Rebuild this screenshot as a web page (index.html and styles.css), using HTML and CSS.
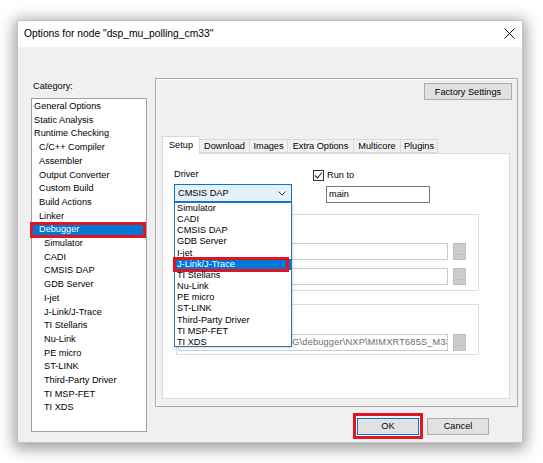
FILE: index.html
```html
<!DOCTYPE html>
<html lang="en">

<head>
    <meta charset="UTF-8">
    <meta name="viewport" content="width=device-width, initial-scale=1.0">
    <title>Options for node</title>
    <link rel="stylesheet" href="styles.css">
</head>

<body>
    <div class="dialog">
        <header class="titlebar">
            <span class="title">Options for node "dsp_mu_polling_cm33"</span>
            <svg class="close" width="11" height="11" viewBox="0 0 11 11">
                <path d="M0.5 0.5 L10.5 10.5 M10.5 0.5 L0.5 10.5" stroke="#111" stroke-width="1" fill="none" />
            </svg>
        </header>
        <div class="dialog-body">
            <div class="category-col">
                <div class="category-label">Category:</div>
                <ul class="tree">
                    <li class="lvl0">General Options</li>
                    <li class="lvl0">Static Analysis</li>
                    <li class="lvl0">Runtime Checking</li>
                    <li class="lvl1">C/C++ Compiler</li>
                    <li class="lvl1">Assembler</li>
                    <li class="lvl1">Output Converter</li>
                    <li class="lvl1">Custom Build</li>
                    <li class="lvl1">Build Actions</li>
                    <li class="lvl1">Linker</li>
                    <li class="lvl1 selected">Debugger</li>
                    <li class="lvl2">Simulator</li>
                    <li class="lvl2">CADI</li>
                    <li class="lvl2">CMSIS DAP</li>
                    <li class="lvl2">GDB Server</li>
                    <li class="lvl2">I-jet</li>
                    <li class="lvl2">J-Link/J-Trace</li>
                    <li class="lvl2">TI Stellaris</li>
                    <li class="lvl2">Nu-Link</li>
                    <li class="lvl2">PE micro</li>
                    <li class="lvl2">ST-LINK</li>
                    <li class="lvl2">Third-Party Driver</li>
                    <li class="lvl2">TI MSP-FET</li>
                    <li class="lvl2">TI XDS</li>
                </ul>
            </div>
            <div class="main-col">
                <div class="panel">
                    <div class="panel-top">
                        <button class="btn factory">Factory Settings</button>
                    </div>
                    <div class="tabs">
                        <div class="tab active" style="width: 38px;">Setup</div>
                        <div class="tab" style="width: 50px;">Download</div>
                        <div class="tab" style="width: 38px;">Images</div>
                        <div class="tab" style="width: 66px;">Extra Options</div>
                        <div class="tab" style="width: 47px;">Multicore</div>
                        <div class="tab" style="width: 37px;">Plugins</div>
                    </div>
                    <div class="tab-page">
                        <div class="setup-top">
                            <div class="driver-col">
                                <div class="label">Driver</div>
                                <div class="combo">
                                    <span>CMSIS DAP</span>
                                    <svg width="8" height="5" viewBox="0 0 8 5">
                                        <path d="M0.5 0.5 L4 4 L7.5 0.5" stroke="#333" stroke-width="1" fill="none" />
                                    </svg>
                                </div>
                            </div>
                            <div class="runto-col">
                                <label class="check-row">
                                    <span class="checkbox">
                                        <svg width="9" height="9" viewBox="0 0 9 9">
                                            <path d="M1 4.5 L3.5 7 L8 1.5" stroke="#222" stroke-width="1.1" fill="none" />
                                        </svg>
                                    </span>
                                    Run to
                                </label>
                                <div class="edit runto-edit">main</div>
                            </div>
                        </div>
                        <div class="group group-macros">
                            <div class="edit-row">
                                <div class="edit disabled wide"></div>
                                <span class="browse">...</span>
                            </div>
                            <div class="edit-row">
                                <div class="edit disabled wide"></div>
                                <span class="browse">...</span>
                            </div>
                        </div>
                        <div class="group group-ddf">
                            <div class="edit-row">
                                <div class="edit disabled ddf">$TOOLKIT_DIR$\CONFIG\debugger\NXP\MIMXRT685S_M33.ddf</div>
                                <span class="browse">...</span>
                            </div>
                        </div>
                        <ul class="dropdown-list">
                            <li>Simulator</li>
                            <li>CADI</li>
                            <li>CMSIS DAP</li>
                            <li>GDB Server</li>
                            <li>I-jet</li>
                            <li class="selected">J-Link/J-Trace</li>
                            <li>TI Stellaris</li>
                            <li>Nu-Link</li>
                            <li>PE micro</li>
                            <li>ST-LINK</li>
                            <li>Third-Party Driver</li>
                            <li>TI MSP-FET</li>
                            <li>TI XDS</li>
                        </ul>
                    </div>
                </div>
                <div class="dialog-buttons">
                    <span class="ok-mark"><button class="btn ok">OK</button></span>
                    <button class="btn cancel">Cancel</button>
                </div>
            </div>
        </div>
    </div>
</body>

</html>
```

FILE: styles.css
```css
/* Geral */
* {
    box-sizing: border-box;
}

body {
    margin: 0;
    padding: 20px 0 0 17px;
    width: 543px;
    height: 463px;
    overflow: hidden;
    background-color: #ffffff;
    font-family: "Liberation Sans", Arial, sans-serif;
    font-size: 9.2px;
    color: #000;
}

ul {
    list-style: none;
    margin: 0;
    padding: 0;
}

.dialog {
    width: 506px;
    height: 423px;
    background-color: #f0f0f0;
    border: 1px solid #c4c4c4;
    box-shadow: 0 3px 14px 3px rgba(0, 0, 0, 0.38);
}

.titlebar {
    height: 26px;
    background-color: #fff;
    display: flex;
    align-items: center;
    justify-content: space-between;
    padding: 0 7px 1px 6px;
}

.title {
    font-size: 10.3px;
}

/* Coluna da categoria */
.dialog-body {
    display: flex;
    padding-left: 13px;
}

.category-col {
    width: 116px;
    padding-top: 33px;
}

.category-label {
    line-height: 12px;
    padding-left: 2px;
}

.tree {
    margin-top: 6px;
    height: 334px;
    background-color: #fff;
    border: 1px solid #a0a0a0;
    padding-top: 1px;
}

.tree li {
    position: relative;
    line-height: 13.7px;
    white-space: nowrap;
}

.tree .lvl0 {
    padding-left: 2px;
}

.tree .lvl1 {
    padding-left: 7px;
}

.tree .lvl2 {
    padding-left: 12px;
}

.tree .selected {
    background-color: #0078d7;
    color: #fff;
}

.tree .selected::after {
    content: "";
    position: absolute;
    left: -2px;
    right: 0;
    top: -1px;
    bottom: -1px;
    border: 3px solid #e2141f;
}

/* Painel da direita */
.main-col {
    width: 363px;
    margin-left: 8px;
    padding-top: 31px;
}

.panel {
    height: 329px;
    border: 1px solid #a9a9a9;
    box-shadow: inset 1px 1px 0 #fff;
    padding: 4px 7px 0 6px;
}

.panel-top {
    display: flex;
    justify-content: flex-end;
    margin-right: -2px;
}

.btn {
    font-family: inherit;
    font-size: 9.2px;
    color: #000;
    background-color: #e1e1e1;
    border: 1px solid #adadad;
    padding: 0;
    height: 17px;
}

.factory {
    width: 88px;
}

.tabs {
    display: flex;
    align-items: flex-end;
    height: 17px;
    margin-top: 36px;
}

.tab {
    height: 14px;
    line-height: 12px;
    text-align: center;
    background-color: #f0f0f0;
    border: 1px solid #d9d9d9;
    border-left: none;
    white-space: nowrap;
}

.tab.active {
    height: 18px;
    margin-bottom: -1px;
    background-color: #fff;
    border-left: 1px solid #d9d9d9;
    border-bottom: none;
    padding-top: 2px;
    position: relative;
    z-index: 1;
}

.tab-page {
    position: relative;
    width: 348px;
    height: 246px;
    background-color: #fff;
    border: 1px solid #d9d9d9;
}

.setup-top {
    display: flex;
    padding: 14px 0 0 11px;
}

.driver-col {
    width: 118px;
}

.label {
    line-height: 12px;
}

.combo {
    margin-top: 4px;
    height: 18px;
    background-color: #e5f1fb;
    border: 1px solid #0078d7;
    display: flex;
    align-items: center;
    justify-content: space-between;
    padding: 0 5px 0 3px;
}

.runto-col {
    margin-left: 21px;
}

.check-row {
    display: flex;
    align-items: center;
    gap: 3px;
    height: 12px;
    margin-top: 1px;
}

.checkbox {
    width: 11px;
    height: 11px;
    border: 1px solid #333;
    background-color: #fff;
    display: flex;
    align-items: center;
    justify-content: center;
}

.edit {
    height: 17px;
    line-height: 15px;
    border: 1px solid #b8b8b8;
    background-color: #fff;
    padding-left: 2px;
    white-space: nowrap;
    overflow: hidden;
}

.runto-edit {
    width: 104px;
    height: 17px;
    margin: 5px 0 0 13px;
    border-color: #7a7a7a;
}

.edit.disabled {
    border-color: #cccccc;
    color: #6d6d6d;
}

/* Grupos atras da lista */
.group {
    width: 303px;
    margin-left: 13px;
    border: 1px solid #dcdcdc;
}

.group-macros {
    height: 77px;
    margin-top: 11px;
    padding-top: 28px;
}

.group-ddf {
    height: 51px;
    margin-top: 13px;
    padding-top: 29px;
}

.edit-row {
    display: flex;
    gap: 5px;
    margin-bottom: 8px;
}

.wide {
    width: 268px;
    margin-left: 3px;
}

.ddf {
    width: 270px;
    margin-left: 1px;
    padding-left: 8px;
    letter-spacing: 0.2px;
}

.browse {
    width: 13px;
    height: 17px;
    background-color: #cccccc;
    border: 1px solid #bfbfbf;
    color: #8a8a8a;
    font-size: 7px;
    line-height: 18px;
    text-align: center;
}

.dropdown-list {
    position: absolute;
    left: 11px;
    top: 48px;
    width: 118px;
    height: 145px;
    background-color: #fff;
    border: 1px solid #3a6ea5;
    box-shadow: 1px 1px 2px rgba(0, 0, 0, 0.15);
    z-index: 2;
}

.dropdown-list li {
    position: relative;
    line-height: 11.15px;
    padding-left: 2px;
    white-space: nowrap;
}

.dropdown-list .selected {
    background-color: #0078d7;
    color: #fff;
}

.dropdown-list .selected::after {
    content: "";
    position: absolute;
    left: -2px;
    right: 2px;
    top: -1.5px;
    bottom: -2.5px;
    border: 3px solid #e2141f;
}

/* Botoes do rodape */
.dialog-buttons {
    display: flex;
    justify-content: flex-end;
    align-items: center;
    gap: 4px;
    margin-top: 6px;
    padding-right: 29px;
}

.ok-mark {
    display: flex;
    align-items: center;
    justify-content: center;
    width: 70px;
    height: 26px;
    border: 3px solid #e2141f;
}

.ok {
    width: 62px;
    border-color: #0078d7;
}

.cancel {
    width: 62px;
}
```
